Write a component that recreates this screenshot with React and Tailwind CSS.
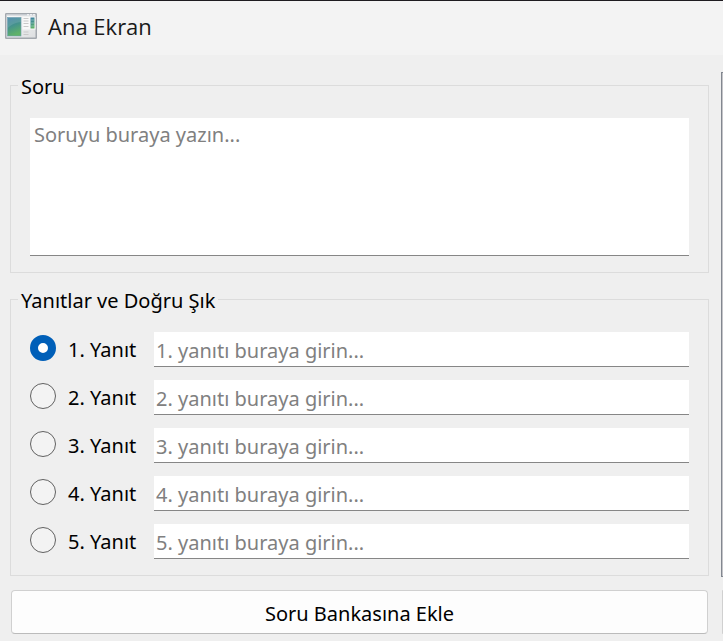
import { useState } from "react";

const answers = [1, 2, 3, 4, 5];

function AppIcon() {
  return (
    <svg className="h-[26px] w-8 shrink-0" viewBox="0 0 32 26" aria-hidden="true">
      <defs>
        <linearGradient id="pane" x1="0" y1="0" x2="0.3" y2="1">
          <stop offset="0" stopColor="#3f7fa6" />
          <stop offset="0.5" stopColor="#45928d" />
          <stop offset="1" stopColor="#5fb268" />
        </linearGradient>
        <linearGradient id="frame" x1="0" y1="0" x2="1" y2="1">
          <stop offset="0" stopColor="#fafafa" />
          <stop offset="1" stopColor="#dcdee0" />
        </linearGradient>
      </defs>
      <rect x="0.75" y="0.75" width="30.5" height="24.5" rx="0.5" fill="url(#frame)" stroke="#a3a8ae" strokeWidth="1.5" />
      <path d="M1.5 2h29" stroke="#c3c9d0" strokeWidth="1" />
      <path d="M22 1.8h2M25 1.8h2M28 1.8h2" stroke="#fff" strokeWidth="1" />
      <rect x="2.5" y="4.5" width="13.5" height="18.5" fill="url(#pane)" stroke="#6f9fb0" strokeWidth="0.6" />
      <path d="M2.8 4.8H15.7V9C10 9.5 6 12 2.8 15Z" fill="#fff" opacity="0.12" />
      <rect x="17.5" y="4" width="13" height="12.5" fill="#f9f9f9" />
      <path d="M18.5 5.500h5M18.5 8h5M18.5 10.5h5M18.5 13.5h5M18.5 19h5M18.5 21.5h5" stroke="#c9c9c9" strokeWidth="1" />
      <rect x="25.5" y="4.5" width="4" height="11" fill="url(#pane)" />
      <path d="M26 7h3M26 10h3M26 13h3" stroke="#a5ccd0" strokeWidth="0.6" />
    </svg>
  );
}

function Group({ title, children }) {
  return (
    <fieldset className="min-w-0 border border-[#dcdcdc]">
      <legend className="ml-[7px] px-[3px] pt-1 leading-[22px]">{title}</legend>
      <div className="px-[19px] pt-5 pb-4">{children}</div>
    </fieldset>
  );
}

export default function App() {
  const [correct, setCorrect] = useState(1);

  return (
    <div className="flex min-h-screen flex-col overflow-hidden border-t border-[#1e1b20] bg-[#efefef] font-['Noto_Sans','Open_Sans',sans-serif] text-[20px] text-black">
      <header className="flex h-[54px] items-center gap-[11px] bg-[#f3f3f3] px-[5px] pb-1">
        <AppIcon />
        <h1 className="font-['Open_Sans','Noto_Sans',sans-serif] text-[22px] text-[#1a1a1a]">Ana Ekran</h1>
      </header>

      <main className="flex pt-[17px] pl-[10px]">
        <form className="flex min-w-0 flex-1 flex-col gap-[13px]" onSubmit={(e) => e.preventDefault()}>
          <Group title="Soru">
            <textarea
              aria-label="Soru"
              placeholder="Soruyu buraya yazın..."
              className="block h-[138px] w-full resize-none border-b border-[#868686] bg-white px-1 py-1 leading-[26px] outline-none placeholder:text-[#808080]"
            />
          </Group>

          <Group title="Yanıtlar ve Doğru Şık">
            <div className="flex flex-col gap-[13px]">
              {answers.map((n) => (
                <div key={n} className="flex h-[35px]">
                  <label className="flex h-8 w-[124px] shrink-0 items-center gap-3 whitespace-nowrap">
                    <input
                      type="radio"
                      name="correct"
                      checked={correct === n}
                      onChange={() => setCorrect(n)}
                      className="size-[26px] shrink-0 appearance-none rounded-full border border-[#616161] bg-[#f3f3f3] checked:border-[8px] checked:border-[#005fb8] checked:bg-white"
                    />
                    <span className="pt-1">{n}. Yanıt</span>
                  </label>
                  <input
                    type="text"
                    aria-label={`${n}. Yanıt metni`}
                    placeholder={`${n}. yanıtı buraya girin...`}
                    className="min-w-0 flex-1 border-b border-[#868686] bg-white px-[2px] pt-1 outline-none placeholder:text-[#808080]"
                  />
                </div>
              ))}
            </div>
          </Group>

          <button
            type="submit"
            className="mx-px mt-px h-11 rounded-[4px] border border-[#d0d0d0] border-b-[#bbbbbb] bg-[#fdfdfd] pt-1"
          >
            Soru Bankasına Ekle
          </button>
        </form>

        <aside className="ml-3 flex w-[2px] flex-col gap-[13px]" aria-hidden="true">
          <div className="flex-1 border-y border-l border-[#828790] bg-[#c4c4c8]" />
          <div className="ml-px h-11 rounded-l-[4px] border-l border-[#d0d0d0] bg-[#dedede]" />
        </aside>
      </main>
    </div>
  );
}
